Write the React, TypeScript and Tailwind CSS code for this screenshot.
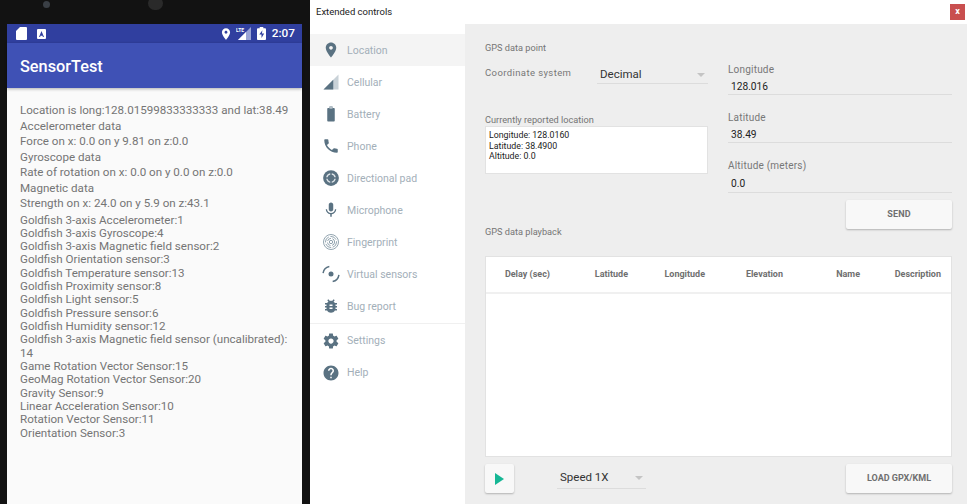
const upperLines = [
  "Location is long:128.01599833333333 and lat:38.49",
  "Accelerometer data",
  "Force on x: 0.0 on y 9.81 on z:0.0",
  "Gyroscope data",
  "Rate of rotation on x: 0.0 on y 0.0 on z:0.0",
  "Magnetic data",
  "Strength on x: 24.0 on y 5.9 on z:43.1",
];

const sensors = [
  "Goldfish 3-axis Accelerometer:1",
  "Goldfish 3-axis Gyroscope:4",
  "Goldfish 3-axis Magnetic field sensor:2",
  "Goldfish Orientation sensor:3",
  "Goldfish Temperature sensor:13",
  "Goldfish Proximity sensor:8",
  "Goldfish Light sensor:5",
  "Goldfish Pressure sensor:6",
  "Goldfish Humidity sensor:12",
  "Goldfish 3-axis Magnetic field sensor (uncalibrated): 14",
  "Game Rotation Vector Sensor:15",
  "GeoMag Rotation Vector Sensor:20",
  "Gravity Sensor:9",
  "Linear Acceleration Sensor:10",
  "Rotation Vector Sensor:11",
  "Orientation Sensor:3",
];

const pinPath = "M12 2C8.13 2 5 5.13 5 9c0 5.25 7 13 7 13s7-7.75 7-13c0-3.87-3.13-7-7-7zm0 9.5c-1.38 0-2.5-1.12-2.5-2.5s1.12-2.5 2.5-2.5 2.5 1.12 2.5 2.5-1.12 2.5-2.5 2.5z";
const batteryPath = "M15.67 4H14V2h-4v2H8.33C7.6 4 7 4.6 7 5.33v15.33C7 21.4 7.6 22 8.33 22h7.33c.74 0 1.34-.6 1.34-1.33V5.33C17 4.6 16.4 4 15.67 4z";

function Icon({ children, size = 18 }: { children: React.ReactNode; size?: number }) {
  return (
    <svg width={size} height={size} viewBox="0 0 24 24" fill="#5a7282" className="shrink-0">
      {children}
    </svg>
  );
}

const navTop = [
  { label: "Location", icon: <Icon><path d={pinPath} /></Icon> },
  { label: "Cellular", icon: <Icon><path d="M2 22h20V2z" fill="#c9d2d8" /><path d="M2 22h13V9z" /></Icon> },
  { label: "Battery", icon: <Icon><path d={batteryPath} /><path d="M10 2h4v3h-4z" fill="#b5c1c9" /></Icon> },
  { label: "Phone", icon: <Icon><path d="M6.62 10.79c1.44 2.83 3.76 5.14 6.59 6.59l2.2-2.2c.27-.27.67-.36 1.02-.24 1.12.37 2.33.57 3.57.57.55 0 1 .45 1 1V20c0 .55-.45 1-1 1-9.39 0-17-7.61-17-17 0-.55.45-1 1-1h3.5c.55 0 1 .45 1 1 0 1.25.2 2.45.57 3.57.11.35.03.74-.25 1.02l-2.2 2.2z" /></Icon> },
  {
    label: "Directional pad",
    icon: (
      <Icon>
        <circle cx="12" cy="12" r="10.5" />
        <circle cx="12" cy="12" r="5.5" fill="none" stroke="#dfe5e9" strokeWidth="2" />
        <path d="M11 5h2v3h-2zM11 16h2v3h-2zM5 11h3v2H5zM16 11h3v2h-3z" fill="#5a7282" />
      </Icon>
    ),
  },
  { label: "Microphone", icon: <Icon><path d="M12 14c1.66 0 2.99-1.34 2.99-3L15 5c0-1.66-1.34-3-3-3S9 3.34 9 5v6c0 1.66 1.34 3 3 3zm5.3-3c0 3-2.54 5.1-5.3 5.1S6.7 14 6.7 11H5c0 3.41 2.72 6.23 6 6.72V21h2v-3.28c3.28-.48 6-3.3 6-6.72h-1.7z" /></Icon> },
  {
    label: "Fingerprint",
    icon: (
      <Icon>
        <g fill="none" stroke="#8fa1ad" strokeWidth="1.3">
          <circle cx="12" cy="12" r="10" />
          <circle cx="12" cy="12" r="7.4" strokeDasharray="9 2" />
          <circle cx="12" cy="12" r="4.8" strokeDasharray="6 2" />
          <circle cx="12" cy="12" r="2.2" />
        </g>
      </Icon>
    ),
  },
  {
    label: "Virtual sensors",
    icon: (
      <Icon size={20}>
        <circle cx="12" cy="12" r="3" />
        <path d="M2.5 11A9.5 9.5 0 0 1 10 3" fill="none" stroke="#5a7282" strokeWidth="1.8" />
        <path d="M21.5 13A9.5 9.5 0 0 1 14 21" fill="none" stroke="#5a7282" strokeWidth="1.8" />
      </Icon>
    ),
  },
  { label: "Bug report", icon: <Icon><path d="M20 8h-2.81c-.45-.78-1.07-1.45-1.82-1.96L17 4.41 15.59 3l-2.17 2.17C12.96 5.06 12.49 5 12 5c-.49 0-.96.06-1.41.17L8.41 3 7 4.41l1.62 1.63C7.88 6.55 7.26 7.22 6.81 8H4v2h2.09c-.05.33-.09.66-.09 1v1H4v2h2v1c0 .34.04.67.09 1H4v2h2.81c1.04 1.79 2.97 3 5.19 3s4.15-1.21 5.19-3H20v-2h-2.09c.05-.33.09-.66.09-1v-1h2v-2h-2v-1c0-.34-.04-.67-.09-1H20V8zm-6 8h-4v-2h4v2zm0-4h-4v-2h4v2z" /></Icon> },
];

const navBottom = [
  { label: "Settings", icon: <Icon><path d="M19.43 12.98c.04-.32.07-.64.07-.98s-.03-.66-.07-.98l2.11-1.65c.19-.15.24-.42.12-.64l-2-3.46c-.12-.22-.39-.3-.61-.22l-2.49 1c-.52-.4-1.08-.73-1.69-.98l-.38-2.65C14.46 2.18 14.25 2 14 2h-4c-.25 0-.46.18-.49.42l-.38 2.65c-.61.25-1.17.59-1.69.98l-2.49-1c-.23-.09-.49 0-.61.22l-2 3.46c-.13.22-.07.49.12.64l2.11 1.65c-.04.32-.07.65-.07.98s.03.66.07.98l-2.11 1.65c-.19.15-.24.42-.12.64l2 3.46c.12.22.39.3.61.22l2.49-1c.52.4 1.08.73 1.69.98l.38 2.65c.03.24.24.42.49.42h4c.25 0 .46-.18.49-.42l.38-2.65c.61-.25 1.17-.59 1.69-.98l2.49 1c.23.09.49 0 .61-.22l2-3.46c.12-.22.07-.49-.12-.64l-2.11-1.65zM12 15.5c-1.93 0-3.5-1.57-3.5-3.5s1.57-3.5 3.5-3.5 3.5 1.57 3.5 3.5-1.57 3.5-3.5 3.5z" /></Icon> },
  { label: "Help", icon: <Icon><path d="M12 2C6.48 2 2 6.48 2 12s4.48 10 10 10 10-4.48 10-10S17.52 2 12 2zm1 17h-2v-2h2v2zm2.07-7.75l-.9.92C13.45 12.9 13 13.5 13 15h-2v-.5c0-1.1.45-2.1 1.17-2.83l1.24-1.26c.37-.36.59-.86.59-1.41 0-1.1-.9-2-2-2s-2 .9-2 2H8c0-2.21 1.79-4 4-4s4 1.79 4 4c0 .88-.36 1.68-.93 2.25z" /></Icon> },
];

const columns = [
  { label: "Delay (sec)", cls: "w-[64px]" },
  { label: "Latitude", cls: "w-[78px]" },
  { label: "Longitude", cls: "w-[77px]" },
  { label: "Elevation", cls: "w-[78px]" },
  { label: "Name", cls: "w-[77px]" },
  { label: "Description", cls: "w-[81px]" },
];

function NavRow({ label, icon, active, nudge }: { label: string; icon: React.ReactNode; active?: boolean; nudge?: boolean }) {
  return (
    <div className={`flex h-8 items-center ${active ? "bg-[#f4f4f4]" : ""}`}>
      <div className="flex w-[37px] shrink-0 justify-center pl-[5px]">{icon}</div>
      <span className={`text-[10.5px] text-[#a3afb9] ${nudge ? "mt-[2px]" : ""}`}>{label}</span>
    </div>
  );
}

function Field({ label, value, last }: { label: string; value: string; last?: boolean }) {
  return (
    <div className={last ? "h-[34px]" : "h-12"}>
      <div className="text-[10px] leading-[14px] tracking-[0.2px] text-[#777]">{label}</div>
      <div className={`border-b border-[#dcdcdc] pl-[3px] text-[10.2px] leading-[14px] text-[#222] ${last ? "mt-[4px] h-[16px]" : "mt-[3px] h-[15px]"}`}>
        {value}
      </div>
    </div>
  );
}

function RaisedButton({ children, className }: { children: React.ReactNode; className: string }) {
  return (
    <div className={`flex h-[29px] items-center justify-center rounded-[2px] bg-[#f8f8f8] text-[9px] font-bold text-[#6f6f6f] shadow-[0_1px_2px_rgba(0,0,0,0.25)] ${className}`}>
      {children}
    </div>
  );
}

function Dropdown({ label, className }: { label: string; className: string }) {
  return (
    <div className={`flex items-center justify-between border-b border-[#dcdcdc] px-[3px] text-[11.5px] text-[#333] ${className}`}>
      <span>{label}</span>
      <span className="h-0 w-0 border-x-[4px] border-t-[4px] border-x-transparent border-t-[#c4c4c4]" />
    </div>
  );
}

export default function App() {
  return (
    <div className="flex h-[504px] w-[967px] overflow-hidden bg-white font-['Roboto',sans-serif]">
      {/* emulator */}
      <div className="relative w-[310px] shrink-0 bg-[#121212] pt-6 pr-2 pl-[7px]">
        <div className="absolute top-[1px] left-[43px] h-[7px] w-[7px] rounded-full bg-[#3a3f45]" />
        <div className="absolute top-[-3px] left-[148px] h-[13px] w-[15px] rounded-full bg-[#2a2a2a]" />

        <div className="flex h-full flex-col bg-[#fafafa]">
          <div className="flex h-[19px] items-center bg-[#303f9f] pr-[7px] pl-[9px] text-white">
            <svg width="11" height="13" viewBox="0 0 11 13" fill="white">
              <path d="M4 0h6a1 1 0 0 1 1 1v11a1 1 0 0 1-1 1H1a1 1 0 0 1-1-1V4z" />
            </svg>
            <svg width="9" height="10" viewBox="0 0 9 10" className="ml-[10px]">
              <rect width="9" height="10" rx="1" fill="white" />
              <path d="M4.5 2 7 8H5.9l-.4-1.2H3.5L3.1 8H2z" fill="#303f9f" />
            </svg>
            <svg width="14" height="14" viewBox="0 0 24 24" fill="white" className="ml-auto">
              <path d={pinPath} />
            </svg>
            <svg width="15" height="13" viewBox="0 0 15 13" className="ml-[3px]">
              <path d="M15 0v13H2z" fill="#9aa4d6" />
              <path d="M10 5v8H2z" fill="white" />
              <text x="0" y="5" fontSize="5" fontWeight="700" fill="white">LTE</text>
            </svg>
            <svg width="9" height="13" viewBox="7 2 10 20" preserveAspectRatio="none" className="ml-[6px]">
              <path d={batteryPath} fill="white" />
              <path d="M13 7l-3.5 6.5H12V19l3-7h-2.5z" fill="#303f9f" />
            </svg>
            <span className="ml-[6px] text-[11.8px] font-medium">2:07</span>
          </div>

          <div className="flex h-[45px] items-center bg-[#3f51b5] pt-1 pl-[13px] text-[16.3px] font-medium text-white shadow-[0_1px_3px_rgba(0,0,0,0.3)]">
            SensorTest
          </div>

          <div className="px-[13px] pt-[15px] text-[11.6px] text-[#757575]">
            {upperLines.map((line) => (
              <div key={line} className="h-[15.5px] leading-[15.5px] whitespace-nowrap">{line}</div>
            ))}
            <div className="pt-[2px]">
              {sensors.map((line) => (
                <div key={line} className="leading-[13.33px]">{line}</div>
              ))}
            </div>
          </div>
        </div>
      </div>

      {/* extended controls window */}
      <div className="flex min-w-0 flex-1 flex-col">
        <div className="flex h-6 items-center justify-between pr-[2px] pl-[6px]">
          <span className="text-[9.5px] text-[#222]">Extended controls</span>
          <div className="flex h-4 w-[15px] items-center justify-center bg-[#c94f4f] text-[9px] font-bold text-white">x</div>
        </div>

        <div className="flex flex-1">
          <div className="w-[155px] shrink-0 pt-[10px]">
            {navTop.map((item, i) => (
              <NavRow key={item.label} {...item} active={i === 0} nudge />
            ))}
            <div className="my-[1px] h-[1px] bg-[#f0f0f0]" />
            {navBottom.map((item) => (
              <NavRow key={item.label} {...item} />
            ))}
          </div>

          <div className="min-w-0 flex-1 bg-[#eeeeee] pt-[18px] pr-[15px] pl-5">
            <div className="flex h-[187px] justify-between">
              <div className="w-[223px]">
                <div className="text-[9.2px] leading-3 text-[#757575]">GPS data point</div>
                <div className="mt-[12px] flex items-start">
                  <span className="w-[112px] text-[9.5px] leading-[14px] tracking-[0.4px] text-[#777]">Coordinate system</span>
                  <Dropdown label="Decimal" className="h-[18px] w-[111px]" />
                </div>
                <div className="mt-[30px] text-[9.2px] leading-3 text-[#757575]">Currently reported location</div>
                <div className="h-[48px] border border-[#e2e2e2] bg-white px-[3px] pt-[3px] text-[8.8px] leading-[10.5px] text-[#222]">
                  <div>Longitude: 128.0160</div>
                  <div>Latitude: 38.4900</div>
                  <div>Altitude: 0.0</div>
                </div>
              </div>
              <div className="w-[224px] pt-[21px]">
                <Field label="Longitude" value="128.016" />
                <Field label="Latitude" value="38.49" />
                <Field label="Altitude (meters)" value="0.0" last />
                <div className="mt-[7px] flex justify-end">
                  <RaisedButton className="w-[106px] tracking-[0.2px]">SEND</RaisedButton>
                </div>
              </div>
            </div>

            <div className="mt-[-3px] text-[9.2px] leading-3 text-[#757575]">GPS data playback</div>

            <div className="mt-[18px] h-[201px] border border-[#e2e2e2] bg-white">
              <div className="flex h-[37px] items-center border-b-2 border-[#f0f0f0] pt-[1px] text-[9px] font-bold text-[#6f6f6f]">
                {columns.map((col) => (
                  <div key={col.label} className={`text-right whitespace-nowrap ${col.cls}`}>{col.label}</div>
                ))}
              </div>
            </div>

            <div className="mt-[7px] flex items-center">
              <RaisedButton className="w-[29px]">
                <span className="h-0 w-0 border-y-[6px] border-l-[9px] border-y-transparent border-l-[#16b795]" />
              </RaisedButton>
              <Dropdown label="Speed 1X" className="ml-[43px] h-[21px] w-[89px]" />
              <RaisedButton className="ml-auto w-[106px]">LOAD GPX/KML</RaisedButton>
            </div>
          </div>
        </div>
      </div>
    </div>
  );
}
